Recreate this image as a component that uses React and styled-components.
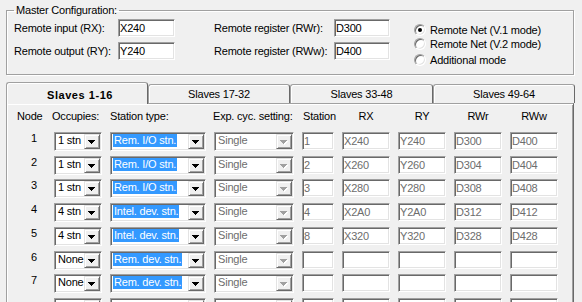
import React from 'react';
import styled, { createGlobalStyle, css } from 'styled-components';

const GlobalStyle = createGlobalStyle`
  html, body { margin: 0; padding: 0; overflow: hidden; background: #f0f0f0; }
  body {
    font-family: "Liberation Sans", Arial, sans-serif;
    font-size: 11px;
    letter-spacing: -0.2px;
    color: #000;
  }
  * { box-sizing: border-box; }
`;

const sunken = css`
  border: 1px solid;
  border-color: #a0a0a0 #ffffff #ffffff #a0a0a0;
  box-shadow: inset 1px 1px 0 #696969, inset -1px -1px 0 #e3e3e3;
  background: #fff;
`;

const Dialog = styled.div`
  width: 582px;
  height: 302px;
  overflow: hidden;
  padding-top: 4px;
  background: #f0f0f0;
`;

const GroupBox = styled.fieldset`
  margin: 0 8px 0 6px;
  padding: 2px 0 8px 7px;
  border: 1px solid #a0a0a0;
  box-shadow: inset 1px 1px 0 #fff, 1px 1px 0 #fff;
  min-width: 0;
`;

const Legend = styled.legend`
  padding: 0 2px;
  line-height: 13px;
`;

const MasterBody = styled.div`
  display: flex;
  align-items: flex-start;
`;

const FieldColumn = styled.div`
  display: grid;
  grid-template-columns: ${p => p.$label}px ${p => p.$input}px;
  row-gap: 5px;
  align-items: center;
  margin-left: ${p => p.$offset || 0}px;
`;

const FieldLabel = styled.span`
  line-height: 13px;
  white-space: nowrap;
`;

const TextBox = styled.div`
  ${sunken};
  width: ${p => p.$w}px;
  height: ${p => p.$h || 18}px;
  padding: 0 0 0 1px;
  line-height: ${p => (p.$h || 18) - 2}px;
  color: ${p => (p.$muted ? '#6d6d6d' : '#000')};
  white-space: nowrap;
  overflow: hidden;
`;

const RadioGroup = styled.div`
  display: flex;
  flex-direction: column;
  margin-left: 24px;
  padding-top: 4px;
`;

const RadioRow = styled.div`
  display: flex;
  align-items: center;
  gap: 4px;
  height: 13px;
  margin-top: ${p => p.$gap || 0}px;
  white-space: nowrap;
`;

const RadioCircle = styled.span`
  position: relative;
  flex: none;
  width: 12px;
  height: 12px;
  border-radius: 50%;
  border: 1px solid;
  border-color: #a0a0a0 #ffffff #ffffff #a0a0a0;
  box-shadow: inset 1px 1px 0 #696969, inset -1px -1px 0 #e3e3e3;
  background: #fff;
  &::after {
    content: '';
    display: ${p => (p.$checked ? 'block' : 'none')};
    position: absolute;
    left: 3px;
    top: 3px;
    width: 4px;
    height: 4px;
    border-radius: 50%;
    background: #000;
  }
`;

const TabStrip = styled.div`
  display: flex;
  align-items: flex-end;
  height: 21px;
  margin-top: 7px;
  padding-left: 6px;
`;

const Tab = styled.div`
  position: relative;
  z-index: ${p => (p.$active ? 1 : 0)};
  flex: none;
  width: ${p => p.$w}px;
  height: ${p => (p.$active ? 22 : 19)}px;
  margin-bottom: ${p => (p.$active ? -1 : 0)}px;
  padding-top: ${p => (p.$active ? 6 : 3)}px;
  padding-left: ${p => (p.$active ? 6 : 0)}px;
  border: 1px solid #a0a0a0;
  border-right-color: #696969;
  border-bottom: none;
  border-radius: 3px 3px 0 0;
  box-shadow: inset 1px 1px 0 #fff;
  background: #f0f0f0;
  text-align: center;
  line-height: 13px;
  white-space: nowrap;
  font-weight: ${p => (p.$active ? 700 : 400)};
  letter-spacing: ${p => (p.$active ? '0.55px' : '-0.2px')};
`;

const Panel = styled.div`
  margin: 0 8px 0 6px;
  padding: 6px 0 0 7px;
  border: 1px solid #a0a0a0;
  border-right-color: #696969;
  border-bottom: none;
  box-shadow: inset 1px 1px 0 #fff, inset -1px 0 0 #a0a0a0;
  height: 220px;
`;

const columns = css`
  display: grid;
  grid-template-columns: 32px 48px 96px 80px 32px 48px 48px 48px 48px;
  column-gap: 8px;
`;

const HeaderRow = styled.div`
  ${columns};
  line-height: 13px;
  white-space: nowrap;
`;

const HeadCell = styled.span`
  text-align: ${p => p.$align || 'left'};
  margin-left: ${p => p.$indent || 0}px;
`;

const Rows = styled.div`
  display: flex;
  flex-direction: column;
  gap: 4.71px;
  margin-top: 9px;
`;

const Row = styled.div`
  ${columns};
  align-items: start;
  height: 19px;
`;

const NodeNum = styled.span`
  text-align: right;
  padding-right: 9px;
  line-height: 12px;
`;

const Combo = styled.div`
  ${sunken};
  display: flex;
  height: 19px;
  padding: 1px;
`;

const ComboText = styled.div`
  flex: 1;
  min-width: 0;
  overflow: hidden;
  white-space: nowrap;
  padding-left: 1px;
  line-height: 13px;
`;

const ComboValue = styled.span`
  display: inline-block;
  height: 13px;
  padding: 0 1px;
  background: ${p => (p.$selected ? '#3399ff' : 'transparent')};
  color: ${p => (p.$selected ? '#fff' : p.$disabled ? '#6d6d6d' : '#000')};
`;

const ComboButton = styled.div`
  flex: none;
  width: 16px;
  height: 15px;
  display: flex;
  align-items: center;
  justify-content: center;
  background: #f0f0f0;
  border: 1px solid;
  border-color: #e3e3e3 #696969 #696969 #e3e3e3;
  box-shadow: inset 1px 1px 0 #fff, inset -1px -1px 0 #a0a0a0;
  svg { display: block; margin-top: 2px; }
`;

const Arrow = ({ disabled }) => (
  <svg width="8" height="5" viewBox="0 0 8 5" shapeRendering="crispEdges">
    {disabled && <path d="M1 1h7v1H1zM2 2h5v1H2zM3 3h3v1H3zM4 4h1v1H4z" fill="#fff" />}
    <path d="M0 0h7v1H0zM1 1h5v1H1zM2 2h3v1H2zM3 3h1v1H3z" fill={disabled ? '#a0a0a0' : '#000'} />
  </svg>
);

const ComboBox = ({ value, selected, disabled }) => (
  <Combo>
    <ComboText>
      {value && <ComboValue $selected={selected} $disabled={disabled}>{value}</ComboValue>}
    </ComboText>
    <ComboButton>
      <Arrow disabled={disabled} />
    </ComboButton>
  </Combo>
);

// The 8th row only shows the top edge of its fields in the window.
const slaves = [
  ['1', '1 stn', 'Rem. I/O stn.', 'Single', '1', 'X240', 'Y240', 'D300', 'D400'],
  ['2', '1 stn', 'Rem. I/O stn.', 'Single', '2', 'X260', 'Y260', 'D304', 'D404'],
  ['3', '1 stn', 'Rem. I/O stn.', 'Single', '3', 'X280', 'Y280', 'D308', 'D408'],
  ['4', '4 stn', 'Intel. dev. stn.', 'Single', '4', 'X2A0', 'Y2A0', 'D312', 'D412'],
  ['5', '4 stn', 'Intel. dev. stn.', 'Single', '8', 'X320', 'Y320', 'D328', 'D428'],
  ['6', 'None', 'Rem. dev. stn.', 'Single', '', '', '', '', ''],
  ['7', 'None', 'Rem. dev. stn.', 'Single', '', '', '', '', ''],
  ['', '', '', '', '', '', '', '', ''],
];

const tabs = [
  { label: 'Slaves 1-16', w: 142, active: true },
  { label: 'Slaves 17-32', w: 142 },
  { label: 'Slaves 33-48', w: 143 },
  { label: 'Slaves 49-64', w: 142 },
];

const radios = [
  { label: 'Remote Net (V.1 mode)', checked: true, gap: 0 },
  { label: 'Remote Net (V.2 mode)', gap: 1 },
  { label: 'Additional mode', gap: 3 },
];

export default function App() {
  return (
    <>
      <GlobalStyle />
      <Dialog>
        <GroupBox>
          <Legend>Master Configuration:</Legend>
          <MasterBody>
            <FieldColumn $label={104} $input={57}>
              <FieldLabel>Remote input (RX):</FieldLabel>
              <TextBox $w={57}>X240</TextBox>
              <FieldLabel>Remote output (RY):</FieldLabel>
              <TextBox $w={57}>Y240</TextBox>
            </FieldColumn>
            <FieldColumn $label={120} $input={56} $offset={39}>
              <FieldLabel>Remote register (RWr):</FieldLabel>
              <TextBox $w={56}>D300</TextBox>
              <FieldLabel>Remote register (RWw):</FieldLabel>
              <TextBox $w={56}>D400</TextBox>
            </FieldColumn>
            <RadioGroup>
              {radios.map(r => (
                <RadioRow key={r.label} $gap={r.gap}>
                  <RadioCircle $checked={r.checked} />
                  <span>{r.label}</span>
                </RadioRow>
              ))}
            </RadioGroup>
          </MasterBody>
        </GroupBox>

        <TabStrip>
          {tabs.map(t => (
            <Tab key={t.label} $w={t.w} $active={t.active}>{t.label}</Tab>
          ))}
        </TabStrip>
        <Panel>
          <HeaderRow>
            <HeadCell $indent={3}>Node</HeadCell>
            <HeadCell $indent={-2}>Occupies:</HeadCell>
            <HeadCell>Station type:</HeadCell>
            <HeadCell $indent={-1}>Exp. cyc. setting:</HeadCell>
            <HeadCell $indent={1}>Station</HeadCell>
            <HeadCell $align="center">RX</HeadCell>
            <HeadCell $align="center">RY</HeadCell>
            <HeadCell $align="center">RWr</HeadCell>
            <HeadCell $align="center">RWw</HeadCell>
          </HeaderRow>
          <Rows>
            {slaves.map(([node, occ, type, cyc, stn, rx, ry, rwr, rww], i) => (
              <Row key={i}>
                <NodeNum>{node}</NodeNum>
                <ComboBox value={occ} />
                <ComboBox value={type} selected />
                <ComboBox value={cyc} disabled />
                <TextBox $w={32} $muted>{stn}</TextBox>
                <TextBox $w={48} $muted>{rx}</TextBox>
                <TextBox $w={48} $muted>{ry}</TextBox>
                <TextBox $w={48} $muted>{rwr}</TextBox>
                <TextBox $w={48} $muted>{rww}</TextBox>
              </Row>
            ))}
          </Rows>
        </Panel>
      </Dialog>
    </>
  );
}
